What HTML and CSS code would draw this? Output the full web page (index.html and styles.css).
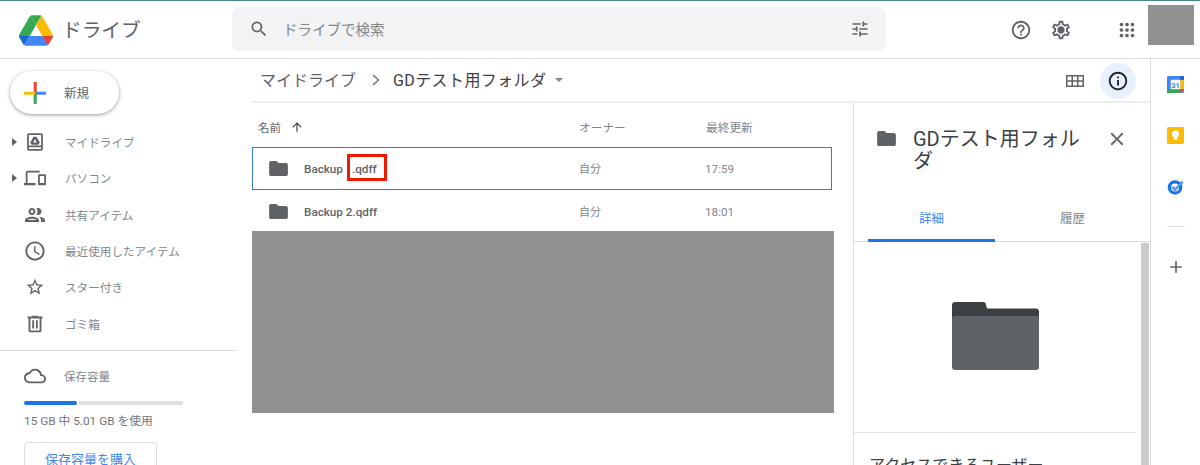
FILE: index.html
```html
<!DOCTYPE html>
<html lang="ja">
<head>
<meta charset="utf-8">
<title>ドライブ</title>
<link rel="stylesheet" href="styles.css">
</head>
<body>
<div class="app">
  <header class="topbar">
    <div class="brand">
      <svg class="logo" viewBox="0 0 87.3 78"><path d="m6.6 66.85 3.85 6.65c.8 1.4 1.95 2.5 3.3 3.3l13.75-23.8h-27.5c0 1.55.4 3.1 1.2 4.5z" fill="#1967d2"/><path d="m43.65 25-13.75-23.8c-1.35.8-2.5 1.9-3.3 3.3l-25.4 44a9.06 9.06 0 0 0 -1.2 4.5h27.5z" fill="#34a853"/><path d="m73.55 76.8c1.35-.8 2.5-1.9 3.3-3.3l1.6-2.75 7.65-13.25c.8-1.4 1.2-2.95 1.2-4.5h-27.502l5.852 11.5z" fill="#ea4335"/><path d="m43.65 25 13.75-23.8c-1.35-.8-2.9-1.2-4.5-1.2h-18.5c-1.6 0-3.15.45-4.5 1.2z" fill="#34a853"/><path d="m59.8 53h-32.3l-13.75 23.8c1.35.8 2.9 1.2 4.5 1.2h50.8c1.6 0 3.15-.45 4.5-1.2z" fill="#4285f4"/><path d="m73.4 26.5-12.7-22c-.8-1.4-1.95-2.5-3.3-3.3l-13.75 23.8 16.15 28h27.45c0-1.55-.4-3.1-1.2-4.5z" fill="#fbbc04"/></svg>
      <span class="brand-name">ドライブ</span>
    </div>
    <div class="search">
      <svg class="ic20" viewBox="0 0 24 24"><path fill="#5f6368" d="M15.5 14h-.79l-.28-.27A6.47 6.47 0 0 0 16 9.5 6.5 6.5 0 1 0 9.5 16c1.61 0 3.09-.59 4.23-1.57l.27.28v.79l5 4.99L20.49 19l-4.99-5zm-6 0C7.01 14 5 11.99 5 9.5S7.01 5 9.5 5 14 7.01 14 9.5 11.99 14 9.5 14z"/></svg>
      <span class="search-text">ドライブで検索</span>
      <svg class="ic20" viewBox="0 0 24 24"><path fill="#5f6368" d="M3 17v2h6v-2H3zM3 5v2h10V5H3zm10 16v-2h8v-2h-8v-2h-2v6h2zM7 9v2H3v2h4v2h2V9H7zm14 4v-2H11v2h10zm-6-4h2V7h4V5h-4V3h-2v6z"/></svg>
    </div>
    <div class="top-actions">
      <svg class="ic22 help" viewBox="0 0 24 24"><path fill="#5f6368" d="M11 18h2v-2h-2v2zm1-16C6.48 2 2 6.48 2 12s4.48 10 10 10 10-4.48 10-10S17.52 2 12 2zm0 18c-4.41 0-8-3.59-8-8s3.59-8 8-8 8 3.59 8 8-3.59 8-8 8zm0-14c-2.21 0-4 1.79-4 4h2c0-1.1.9-2 2-2s2 .9 2 2c0 2-3 1.75-3 5h2c0-2.25 3-2.5 3-5 0-2.21-1.79-4-4-4z"/></svg>
      <svg class="ic22 gear" viewBox="0 0 24 24"><path fill="#5f6368" d="M19.43 12.98c.04-.32.07-.64.07-.98 0-.34-.03-.66-.07-.98l2.11-1.65c.19-.15.24-.42.12-.64l-2-3.46c-.12-.22-.39-.3-.61-.22l-2.49 1c-.52-.4-1.08-.73-1.69-.98l-.38-2.65C14.46 2.18 14.25 2 14 2h-4c-.25 0-.46.18-.49.42l-.38 2.65c-.61.25-1.17.59-1.69.98l-2.49-1c-.23-.09-.49 0-.61.22l-2 3.46c-.13.22-.07.49.12.64l2.11 1.65c-.04.32-.07.65-.07.98 0 .33.03.66.07.98l-2.11 1.65c-.19.15-.24.42-.12.64l2 3.46c.12.22.39.3.61.22l2.49-1c.52.4 1.08.73 1.69.98l.38 2.65c.03.24.24.42.49.42h4c.25 0 .46-.18.49-.42l.38-2.65c.61-.25 1.17-.59 1.69-.98l2.49 1c.23.09.49 0 .61-.22l2-3.46c.12-.22.07-.49-.12-.64l-2.11-1.65zM17.45 11.27c.04.31.05.52.05.73 0 .21-.02.43-.05.73l-.14 1.13.89.7 1.08.84-.7 1.21-1.27-.51-1.04-.42-.9.68c-.43.32-.84.56-1.25.73l-1.06.43-.16 1.13-.2 1.35h-1.4l-.19-1.35-.16-1.13-1.06-.43c-.43-.18-.83-.41-1.23-.71l-.91-.7-1.06.43-1.27.51-.7-1.21 1.08-.84.89-.7-.14-1.13c-.03-.31-.05-.54-.05-.74s.02-.43.05-.73l.14-1.13-.89-.7-1.08-.84.7-1.21 1.27.51 1.04.42.9-.68c.43-.32.84-.56 1.25-.73l1.06-.43.16-1.13.2-1.35h1.39l.19 1.35.16 1.13 1.06.43c.43.18.83.41 1.23.71l.91.7 1.06-.43 1.27-.51.7 1.21-1.07.85-.89.7.14 1.13zM12 8c-2.21 0-4 1.79-4 4s1.79 4 4 4 4-1.79 4-4-1.79-4-4-4z"/></svg>
      <svg class="ic22 apps" viewBox="0 0 24 24"><path fill="#5f6368" d="M6 8c1.1 0 2-.9 2-2s-.9-2-2-2-2 .9-2 2 .9 2 2 2zm6 12c1.1 0 2-.9 2-2s-.9-2-2-2-2 .9-2 2 .9 2 2 2zm-6 0c1.1 0 2-.9 2-2s-.9-2-2-2-2 .9-2 2 .9 2 2 2zm0-6c1.1 0 2-.9 2-2s-.9-2-2-2-2 .9-2 2 .9 2 2 2zm6 0c1.1 0 2-.9 2-2s-.9-2-2-2-2 .9-2 2 .9 2 2 2zm4-8c0 1.1.9 2 2 2s2-.9 2-2-.9-2-2-2-2 .9-2 2zm-4 2c1.1 0 2-.9 2-2s-.9-2-2-2-2 .9-2 2 .9 2 2 2zm6 6c1.1 0 2-.9 2-2s-.9-2-2-2-2 .9-2 2 .9 2 2 2zm0 6c1.1 0 2-.9 2-2s-.9-2-2-2-2 .9-2 2 .9 2 2 2z"/></svg>
      <div class="avatar"></div>
    </div>
  </header>

  <div class="body">
    <aside class="sidebar">
      <button class="new-btn">
        <svg class="plus" viewBox="0 0 22 22"><rect x="9.7" y="0" width="3" height="11" fill="#ea4335"/><rect x="11" y="9.7" width="11" height="3" fill="#4285f4"/><rect x="9.7" y="11" width="3" height="11" fill="#34a853"/><rect x="0" y="9.7" width="11" height="3" fill="#fbbc04"/></svg>
        <span>新規</span>
      </button>
      <nav class="nav">
        <div class="nav-item">
          <span class="caret"></span>
          <svg class="nav-ic" viewBox="-1.7 -1.7 27.4 27.4"><path fill="#5f6368" fill-rule="evenodd" d="M5 2h14a2 2 0 0 1 2 2v16a2 2 0 0 1-2 2H5a2 2 0 0 1-2-2V4a2 2 0 0 1 2-2zm0 2v12h14V4H5zm0 14v2h14v-2H5z"/><path fill="#5f6368" fill-rule="evenodd" d="M10.300 6h3.400L17.500 12.500 15.800 15H8.200L6.500 12.500zM12 8.500 10 12.500h4z"/></svg>
          <span>マイドライブ</span>
        </div>
        <div class="nav-item">
          <span class="caret"></span>
          <svg class="nav-ic" viewBox="-2.15 -1.4 27.3 27.3"><path fill="#5f6368" d="M3 6h14V4H3a2 2 0 0 0-2 2v12H-1v2.500h13V18H3V6zm20 2h-7a1 1 0 0 0-1 1v10.500a1 1 0 0 0 1 1h7a1 1 0 0 0 1-1V9a1 1 0 0 0-1-1zm-1 10h-5v-8h5v8z"/></svg>
          <span>パソコン</span>
        </div>
        <div class="nav-item">
          <span class="caret blank"></span>
          <svg class="nav-ic" viewBox="0 0 24 24"><path fill="#5f6368" d="M9 13.750c-2.340 0-7 1.170-7 3.500V19h14v-1.750c0-2.330-4.660-3.500-7-3.500zM4.340 17c.84-.58 2.870-1.250 4.660-1.250s3.820.67 4.660 1.250H4.340zM9 12c1.930 0 3.500-1.570 3.500-3.500S10.930 5 9 5 5.500 6.570 5.500 8.500 7.070 12 9 12zm0-5c.83 0 1.500.67 1.500 1.500S9.830 10 9 10s-1.500-.67-1.500-1.500S8.170 7 9 7zm7.040 6.810c1.160.84 1.960 1.960 1.960 3.440V19h4v-1.750c0-2.020-3.500-3.170-5.960-3.440zM15 12c1.930 0 3.500-1.570 3.500-3.500S16.930 5 15 5c-.54 0-1.040.13-1.500.35.630.89 1 1.980 1 3.150s-.37 2.260-1 3.150c.46.220.96.350 1.500.350z"/></svg>
          <span>共有アイテム</span>
        </div>
        <div class="nav-item">
          <span class="caret blank"></span>
          <svg class="nav-ic" viewBox="-0.5 -0.5 25 25"><path fill="#5f6368" d="M11.990 2C6.470 2 2 6.480 2 12s4.470 10 9.990 10C17.520 22 22 17.520 22 12S17.520 2 11.990 2zM12 20c-4.420 0-8-3.580-8-8s3.580-8 8-8 8 3.580 8 8-3.580 8-8 8zm.5-13H11v6l5.250 3.150.75-1.230-4.500-2.670z"/></svg>
          <span>最近使用したアイテム</span>
        </div>
        <div class="nav-item">
          <span class="caret blank"></span>
          <svg class="nav-ic" viewBox="-2.4 -2.4 28.8 28.8"><path fill="#5f6368" d="M22 9.240l-7.190-.62L12 2 9.190 8.630 2 9.240l5.460 4.730L5.820 21 12 17.270 18.180 21l-1.630-7.030L22 9.240zM12 15.400l-3.760 2.270 1-4.280-3.320-2.880 4.380-.38L12 6.100l1.710 4.040 4.380.38-3.320 2.880 1 4.280L12 15.400z"/></svg>
          <span>スター付き</span>
        </div>
        <div class="nav-item">
          <span class="caret blank"></span>
          <svg class="nav-ic" viewBox="-1 -1 26 26"><path fill="#5f6368" d="M15 4V3H9v1H4v2h1v13c0 1.100.9 2 2 2h10c1.100 0 2-.9 2-2V6h1V4h-5zm2 15H7V6h10v13zM9 8h2v9H9zm4 0h2v9h-2z"/></svg>
          <span>ゴミ箱</span>
        </div>
      </nav>
      <div class="storage">
        <div class="storage-head">
          <svg class="nav-ic" viewBox="-1.1 -1.1 26.2 26.2"><path fill="#5f6368" d="M19.350 10.040A7.490 7.490 0 0 0 12 4C9.110 4 6.600 5.640 5.350 8.040A5.994 5.994 0 0 0 0 14c0 3.310 2.690 6 6 6h13c2.760 0 5-2.240 5-5 0-2.640-2.050-4.780-4.650-4.960zM19 18H6c-2.210 0-4-1.790-4-4 0-2.050 1.530-3.760 3.560-3.970l1.070-.11.500-.95A5.469 5.469 0 0 1 12 6c2.620 0 4.880 1.860 5.390 4.430l.3 1.500 1.530.11A2.980 2.980 0 0 1 22 15c0 1.650-1.350 3-3 3z"/></svg>
          <span>保存容量</span>
        </div>
        <div class="bar"><div class="bar-used"></div><div class="bar-free"></div></div>
        <div class="storage-text">15 GB 中 5.01 GB を使用</div>
        <button class="buy">保存容量を購入</button>
      </div>
    </aside>

    <div class="content">
      <div class="toolbar">
        <div class="crumbs">
          <span class="crumb-root">マイドライブ</span>
          <svg class="chev" viewBox="0 0 8 12"><path fill="none" stroke="#70757a" stroke-width="1.500" d="M1 1l5.500 5L1 11"/></svg>
          <span class="crumb-cur">GDテスト用フォルダ</span>
          <span class="crumb-drop"></span>
        </div>
        <div class="view-tools">
          <svg class="grid-ic" viewBox="0 0 18 12"><path fill="#5f6368" fill-rule="evenodd" d="M0 0h18v12H0zM1.500 1.500v3.700h4v-3.700zm5.500 0v3.700h4v-3.700zm5.500 0v3.700h4v-3.700zM1.500 6.800v3.700h4V6.800zm5.500 0v3.700h4V6.800zm5.500 0v3.700h4V6.800z"/></svg>
          <div class="info-btn">
            <svg class="ic22" viewBox="0 0 24 24"><path fill="#202124" d="M11 7h2v2h-2zm0 4h2v6h-2zm1-9C6.480 2 2 6.480 2 12s4.480 10 10 10 10-4.480 10-10S17.520 2 12 2zm0 18c-4.410 0-8-3.590-8-8s3.590-8 8-8 8 3.590 8 8-3.590 8-8 8z"/></svg>
          </div>
        </div>
      </div>
      <div class="panes">
        <main class="list">
          <div class="list-head">
            <div class="name-head"><span>名前</span><svg class="arrow" viewBox="0 0 24 24"><path fill="#3c4043" d="M4 12l1.410 1.410L11 7.830V20h2V7.830l5.580 5.590L20 12l-8-8-8 8z"/></svg></div>
            <div>オーナー</div>
            <div>最終更新</div>
          </div>
          <div class="row selected">
            <div class="name">
              <svg class="folder" viewBox="0 0 20 16"><path fill="#5f6368" d="M8 0H2C.9 0 0 .9 0 2v12c0 1.100.9 2 2 2h16c1.100 0 2-.9 2-2V4c0-1.100-.9-2-2-2h-8L8 0z"/></svg>
              <span class="fname">Backup</span><span class="mark">.qdff</span>
            </div>
            <div class="own">自分</div>
            <div class="when">17:59</div>
          </div>
          <div class="row">
            <div class="name">
              <svg class="folder" viewBox="0 0 20 16"><path fill="#5f6368" d="M8 0H2C.9 0 0 .9 0 2v12c0 1.100.9 2 2 2h16c1.100 0 2-.9 2-2V4c0-1.100-.9-2-2-2h-8L8 0z"/></svg>
              <span class="fname">Backup 2.qdff</span>
            </div>
            <div class="own">自分</div>
            <div class="when">18:01</div>
          </div>
          <div class="redact"></div>
        </main>
        <aside class="details">
          <div class="det-head">
            <svg class="folder" viewBox="0 0 20 16"><path fill="#5f6368" d="M8 0H2C.9 0 0 .9 0 2v12c0 1.100.9 2 2 2h16c1.100 0 2-.9 2-2V4c0-1.100-.9-2-2-2h-8L8 0z"/></svg>
            <div class="det-title">GDテスト用フォルダ</div>
            <svg class="close" viewBox="0 0 24 24"><path fill="#5f6368" d="M19 6.410 17.590 5 12 10.590 6.410 5 5 6.410 10.590 12 5 17.590 6.410 19 12 13.410 17.590 19 19 17.590 13.410 12z"/></svg>
          </div>
          <div class="tabs">
            <div class="tab active">詳細</div>
            <div class="tab">履歴</div>
          </div>
          <div class="det-body">
            <div class="det-scroll">
              <div class="preview">
                <svg class="big-folder" viewBox="0 0 87 68"><path fill="#3c4043" d="M3 0h28c2 0 3 1 3 3l1 3.500h49c1.700 0 3 1.300 3 3V20H0V3c0-1.700 1.300-3 3-3z"/><path fill="#5f6368" d="M3 14h81c1.700 0 3 1.300 3 3v48c0 1.700-1.300 3-3 3H3c-1.700 0-3-1.300-3-3V17c0-1.700 1.300-3 3-3z"/></svg>
              </div>
              <div class="access">アクセスできるユーザー</div>
            </div>
            <div class="scrollbar"></div>
          </div>
        </aside>
      </div>
    </div>

    <aside class="rail">
      <svg class="rail-ic" viewBox="0 0 18 18"><rect width="18" height="18" rx="1.500" fill="#4285f4"/><rect x="14" y="4" width="4" height="10" fill="#fbbc04"/><rect y="14" width="14" height="4" fill="#34a853"/><path d="M14 0h2.500a1.500 1.500 0 0 1 1.500 1.500V4h-4z" fill="#1967d2"/><path d="M14 14h4l-4 4z" fill="#ea4335"/><rect x="4" y="4" width="10" height="10" fill="#fff"/><text x="9" y="12.300" text-anchor="middle" class="cal-num">31</text></svg>
      <svg class="rail-ic" viewBox="0 0 18 18"><rect width="18" height="18" rx="1.500" fill="#fbbc04"/><circle cx="9" cy="7.500" r="3.800" fill="#fff"/><rect x="7.300" y="11" width="3.400" height="2.600" fill="#fff"/></svg>
      <svg class="rail-ic" viewBox="0 0 18 18"><circle cx="8.500" cy="10" r="6" fill="none" stroke="#1a73e8" stroke-width="3.500"/><path d="M5.500 9.500 8.500 12.500 16.500 4" fill="none" stroke="#1a73e8" stroke-width="2.600"/><path d="M5.800 9.800 8.500 12.500 16 4.500" fill="none" stroke="#fff" stroke-width="0.700"/></svg>
      <div class="rail-sep"></div>
      <svg class="rail-plus" viewBox="0 0 24 24"><path fill="#5f6368" d="M19 13h-6v6h-2v-6H5v-2h6V5h2v6h6z"/></svg>
    </aside>
  </div>
</div>
</body>
</html>
```
FILE: styles.css
```css
* { box-sizing: border-box; }
html, body { margin: 0; height: 100%; overflow: hidden; background: #fff; }
body {
  font-family: Roboto, "Noto Sans CJK JP", sans-serif;
  color: #5f6368;
}
svg { display: block; flex: none; }
button { font-family: inherit; }

.app { width: 1200px; height: 465px; display: flex; flex-direction: column; overflow: hidden; }

.topbar {
  height: 59px; flex: none;
  border-top: 1px solid #47888b;
  border-bottom: 1px solid #dadce0;
  display: flex; align-items: flex-start;
}
.brand { width: 232px; height: 57px; padding-left: 19px; display: flex; align-items: center; gap: 9px; flex: none; }
.logo { width: 34px; height: 31px; margin-top: 1px; }
.brand-name { font-size: 19.700px; color: #5f6368; margin-top: -2px; }
.search {
  width: 654px; height: 44px; margin-top: 6px; flex: none;
  background: #f1f3f4; border-radius: 8px;
  display: flex; align-items: center;
  padding: 0 16px 0 17px;
}
.ic20 { width: 20px; height: 20px; }
.search-text { flex: 1; padding: 0 0 2px 14px; font-size: 14.500px; color: #80868b; }
.top-actions { flex: 1; display: flex; align-items: flex-start; height: 57px; padding-left: 124px; }
.ic22 { width: 22px; height: 22px; }
.help { margin-top: 18px; }
.gear { margin-top: 18px; margin-left: 18px; }
.apps { margin-top: 18px; margin-left: 44px; }
.avatar { width: 46px; height: 40px; margin-top: 4px; margin-left: 10px; background: #919191; }

.body { flex: 1; display: flex; min-height: 0; }

.sidebar { width: 237px; flex: none; display: flex; flex-direction: column; }
.new-btn {
  width: 109px; height: 43px; margin: 12px 0 0 10px; flex: none;
  background: #fff; border: 0; border-radius: 22px;
  box-shadow: 0 1px 3px rgba(60,64,67,.4), 0 1px 4px 1px rgba(60,64,67,.12);
  display: flex; align-items: center; gap: 18px; padding: 0 0 0 14px;
  font-size: 12.500px; color: #5f6368;
}
.plus { width: 22px; height: 22px; }
.nav { margin-top: 10px; flex: none; }
.nav-item {
  height: 36.3px; display: flex; align-items: center;
  font-size: 11.600px; color: #80868b;
  padding-left: 12px;
}
.caret { width: 0; height: 0; border-left: 5px solid #5f6368; border-top: 4px solid transparent; border-bottom: 4px solid transparent; }
.caret.blank { border-left-color: transparent; }
.nav-ic { width: 24px; height: 24px; margin-left: 6px; margin-right: 18px; }

.storage { border-top: 1px solid #dadce0; margin-top: 8.500px; padding-left: 24px; flex: none; }
.storage-head { display: flex; align-items: center; font-size: 11.500px; color: #80868b; margin: 13px 0 0 -1px; height: 24px; }
.storage-head .nav-ic { margin-left: 0; margin-right: 17px; }
.bar { display: flex; width: 159px; height: 4px; margin-top: 13px; gap: 2px; }
.bar-used { width: 53px; background: #1a73e8; border-radius: 2px; }
.bar-free { flex: 1; background: #e0e0e0; }
.storage-text { font-size: 11.800px; color: #70757a; margin-top: 9px; line-height: 14px; }
.buy {
  display: block; width: 133px; height: 36px; margin-top: 14px;
  border: 1px solid #dadce0; border-radius: 4px; background: #fff;
  color: #4285f4; font-size: 13px; padding: 0 0 4px;
}

.content { flex: 1; display: flex; flex-direction: column; min-width: 0; }
.toolbar {
  height: 44px; flex: none; margin-left: 15px;
  border-bottom: 2px solid #eceded;
  display: flex; align-items: center; justify-content: space-between;
  padding-left: 8px; padding-right: 14px;
}
.crumbs { display: flex; align-items: center; font-size: 16px; margin-top: -3px; }
.crumb-root { color: #5f6368; }
.chev { width: 8px; height: 12px; margin: 2px 13px 0 16px; }
.crumb-cur { color: #3c4043; letter-spacing: .4px; }
.crumb-drop { width: 0; height: 0; margin-left: 9px; margin-top: 3px; border-top: 4px solid #80868b; border-left: 4px solid transparent; border-right: 4px solid transparent; }
.view-tools { display: flex; align-items: center; gap: 16px; margin-top: 1px; }
.grid-ic { width: 18px; height: 12px; }
.info-btn { width: 36px; height: 36px; border-radius: 50%; background: #e8f0fe; display: flex; align-items: center; justify-content: center; }

.panes { flex: 1; display: flex; min-height: 0; }
.list { flex: 1; padding-left: 15px; padding-right: 21px; min-width: 0; }
.list-head { height: 44px; padding: 3px 0 0 6px; display: grid; grid-template-columns: 321px 127px 1fr; align-items: center; font-size: 11.700px; color: #80868b; }
.name-head { display: flex; align-items: center; font-size: 11.500px; color: #5f6368; gap: 9px; }
.arrow { width: 14px; height: 14px; }
.row { display: grid; grid-template-columns: 326px 126px 1fr; align-items: center; height: 41px; padding-top: 2px; border: 1px solid transparent; font-size: 11px; color: #80868b; }
.row.selected { height: 43px; padding-top: 0; border-color: #3b78d8; }
.own { padding-bottom: 2px; }
.when { font-size: 11.700px; }
.name { display: flex; align-items: center; padding-left: 16px; font-size: 11.700px; font-weight: 500; color: #5f6368; }
.folder { width: 19px; height: 15px; margin-right: 16px; }
.fname { white-space: pre; }
.mark {
  display: inline-block; margin: -2px 0 0 4px; padding: 5px 0 1px 2px;
  width: 40px; height: 27px;
  border: 3px solid #f01a00; line-height: 15px;
}
.redact { height: 182px; background: #919191; margin-right: -2px; }

.details { width: 297px; flex: none; border-left: 1px solid #dadce0; display: flex; flex-direction: column; min-height: 0; }
.det-head { height: 98px; flex: none; padding: 25px 0 0 23px; display: flex; align-items: flex-start; }
.det-head .folder { width: 19px; height: 15px; margin: 3px 17px 0 0; }
.det-title { width: 178px; font-size: 20px; line-height: 22px; color: #3c4043; }
.close { width: 22px; height: 22px; margin-left: 15px; margin-top: 0; }
.tabs { height: 41px; flex: none; display: flex; padding-left: 14px; border-bottom: 1px solid #dadce0; }
.tab { width: 127px; height: 41px; font-size: 12.500px; color: #80868b; text-align: center; padding-top: 7px; }
.tab + .tab { width: 155px; }
.tab.active { color: #4285f4; border-bottom: 3px solid #1a73e8; }
.det-body { flex: 1; display: flex; min-height: 0; }
.det-scroll { width: 287px; flex: none; }
.preview { height: 191px; display: flex; justify-content: center; padding: 60px 0 0 0; border-bottom: 1px solid #e4e6e8; width: 282px; }
.big-folder { width: 87px; height: 68px; }
.access { font-size: 16px; color: #3c4043; padding: 19px 0 0 15px; white-space: nowrap; }
.scrollbar { width: 8px; background: #cbcbcb; margin-top: 1px; }

.rail { width: 50px; flex: none; border-left: 1px solid #dadce0; display: flex; flex-direction: column; align-items: center; padding-top: 17px; }
.rail-ic { width: 17px; height: 17px; margin-bottom: 34px; }
.cal-num { font: 700 8px Roboto, sans-serif; fill: #4285f4; }
.rail-sep { width: 18px; height: 1px; background: #dadce0; margin-top: -3px; }
.rail-plus { width: 20px; height: 20px; margin-top: 30px; }
```
